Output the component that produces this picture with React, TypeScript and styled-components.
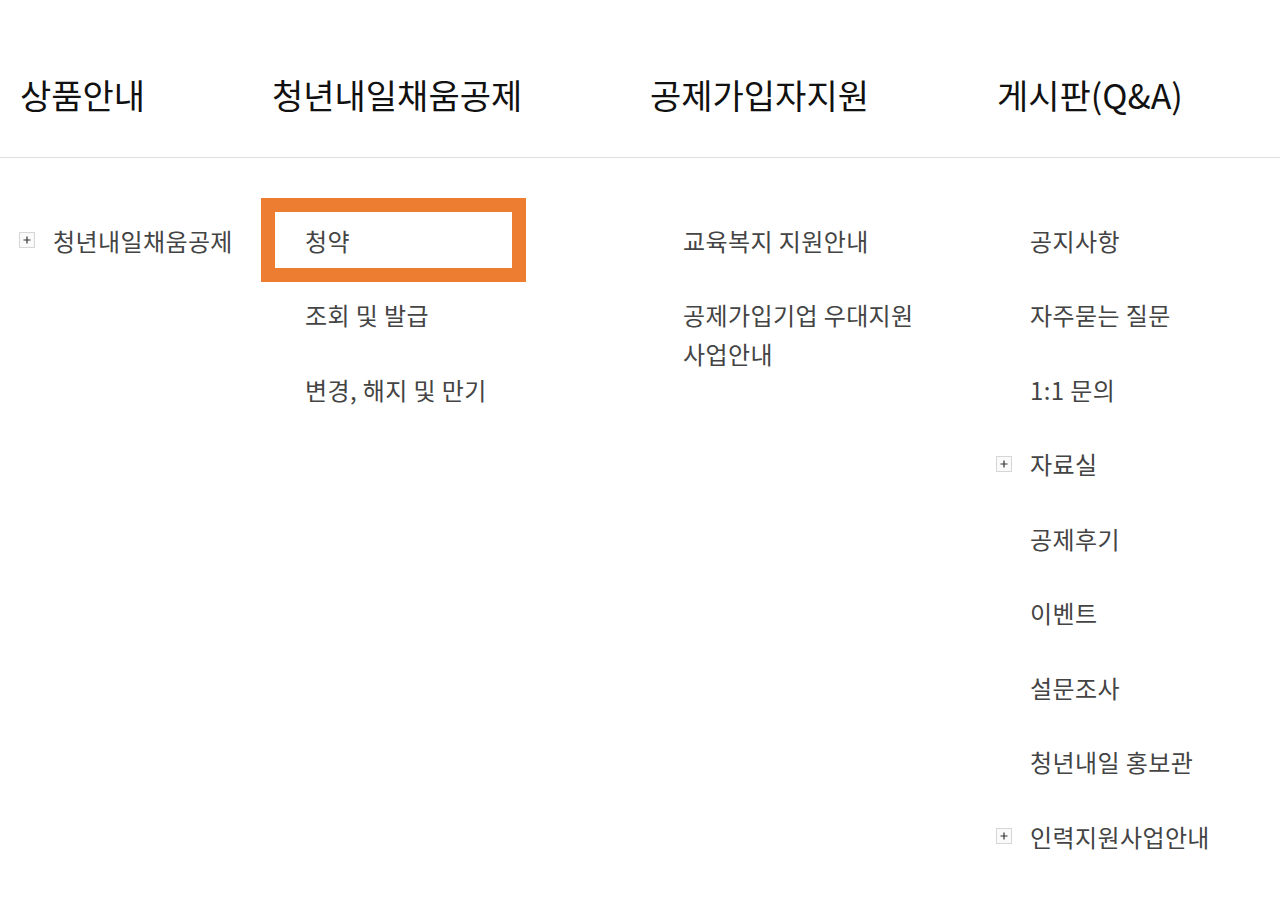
import styled, { createGlobalStyle } from 'styled-components';

const GlobalStyle = createGlobalStyle`
  html, body {
    margin: 0;
    padding: 0;
    background: #ffffff;
  }
  body {
    font-family: "Noto Sans CJK KR", "Noto Sans", sans-serif;
  }
`;

const Page = styled.div`
  width: 1280px;
  min-height: 919px;
  background: #ffffff;
`;

const columns = '252px 378px 347px 1fr';

const HeaderBar = styled.div`
  display: grid;
  grid-template-columns: ${columns};
  padding: 60px 0 27px 20px;
  border-bottom: 1px solid #dedede;
`;

const HeaderTitle = styled.h2`
  margin: 0;
  font-size: 34px;
  font-weight: 400;
  letter-spacing: 0;
  line-height: 70px;
  color: #111111;
  white-space: nowrap;
`;

const Body = styled.div`
  display: grid;
  grid-template-columns: ${columns};
  padding: 54px 0 40px 20px;
`;

const List = styled.ul`
  list-style: none;
  margin: 0;
  padding: 0;
  display: flex;
  flex-direction: column;
  gap: 18.5px;
`;

const Item = styled.li<{ $active?: boolean; $width?: number }>`
  display: flex;
  align-items: flex-start;
  width: ${(p) => p.$width ?? 237}px;
  box-sizing: border-box;
  margin-left: 3px;
  padding: 8.5px 0;
  font-size: 24px;
  letter-spacing: 0.4px;
  line-height: 39px;
  color: #444444;
  word-break: keep-all;
  outline: ${(p) => (p.$active ? '14px solid #ec7d31' : 'none')};
  cursor: pointer;
`;

const Lead = styled.span`
  flex: 0 0 30px;
  height: 39px;
  display: flex;
  align-items: center;
`;

const PlusBox = styled.span`
  width: 16px;
  height: 16px;
  margin-left: -4px;
  box-sizing: border-box;
  border: 1px solid #d6d6d6;
  background: #fafafa;
  display: flex;
  align-items: center;
  justify-content: center;
`;

const Label = styled.span`
  flex: 1;
`;

type Entry = { label: string; plus?: boolean; active?: boolean };

const menus: { title: string; width?: number; items: Entry[] }[] = [
  { title: '상품안내', items: [{ label: '청년내일채움공제', plus: true }] },
  {
    title: '청년내일채움공제',
    items: [
      { label: '청약', active: true },
      { label: '조회 및 발급' },
      { label: '변경, 해지 및 만기' },
    ],
  },
  {
    title: '공제가입자지원',
    width: 275,
    items: [{ label: '교육복지 지원안내' }, { label: '공제가입기업 우대지원 사업안내' }],
  },
  {
    title: '게시판(Q&A)',
    width: 270,
    items: [
      { label: '공지사항' },
      { label: '자주묻는 질문' },
      { label: '1:1 문의' },
      { label: '자료실', plus: true },
      { label: '공제후기' },
      { label: '이벤트' },
      { label: '설문조사' },
      { label: '청년내일 홍보관' },
      { label: '인력지원사업안내', plus: true },
    ],
  },
];

function PlusIcon() {
  return (
    <PlusBox>
      <svg width="8" height="8" viewBox="0 0 8 8">
        <path d="M4 0.5V7.5M0.5 4H7.5" stroke="#333" strokeWidth="1.2" />
      </svg>
    </PlusBox>
  );
}

export default function App() {
  return (
    <Page>
      <GlobalStyle />
      <HeaderBar>
        {menus.map((m) => (
          <HeaderTitle key={m.title}>{m.title}</HeaderTitle>
        ))}
      </HeaderBar>
      <Body>
        {menus.map((m) => (
          <List key={m.title}>
            {m.items.map((it) => (
              <Item key={it.label} $active={it.active} $width={m.width}>
                <Lead>{it.plus && <PlusIcon />}</Lead>
                <Label>{it.label}</Label>
              </Item>
            ))}
          </List>
        ))}
      </Body>
    </Page>
  );
}
